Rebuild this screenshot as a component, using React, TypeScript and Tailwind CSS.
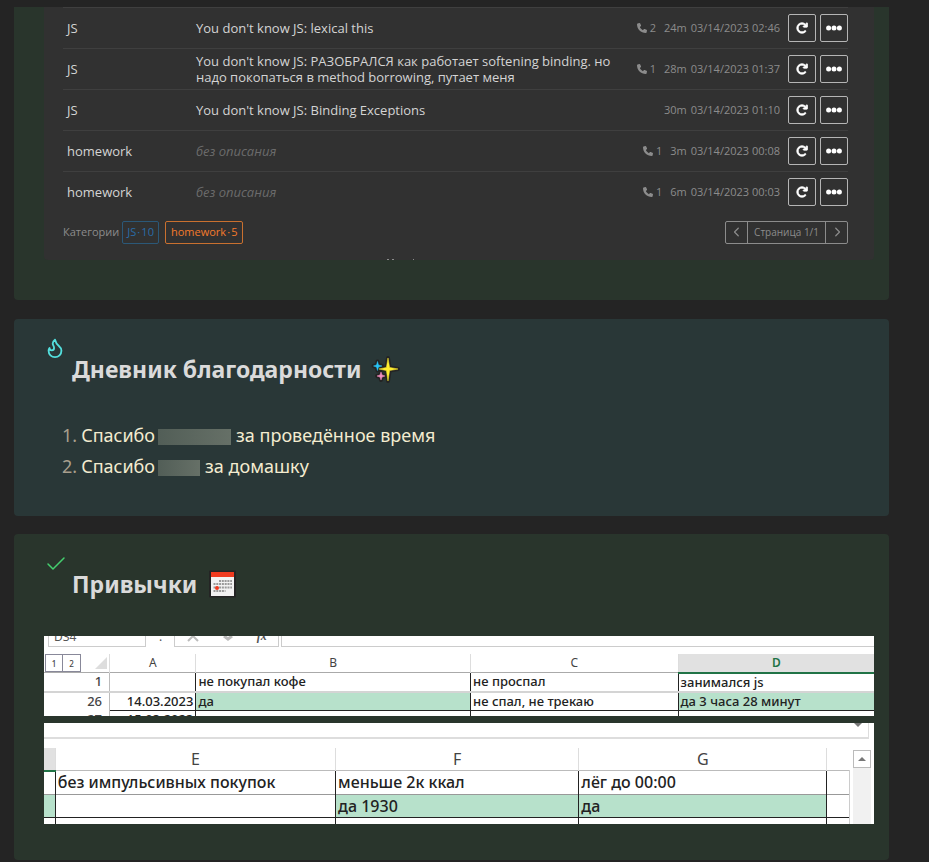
import { FaArrowRotateRight, FaPhone, FaChevronLeft, FaChevronRight } from "react-icons/fa6";
import { Check, Flame } from "lucide-react";

type Entry = { cat: string; text?: string; calls?: number; spent: string; date: string };

const entries: Entry[] = [
  { cat: "JS", text: "You don't know JS: lexical this", calls: 2, spent: "24m", date: "03/14/2023 02:46" },
  {
    cat: "JS",
    text: "You don't know JS: РАЗОБРАЛСЯ как работает softening binding. но надо покопаться в method borrowing, путает меня",
    calls: 1,
    spent: "28m",
    date: "03/14/2023 01:37",
  },
  { cat: "JS", text: "You don't know JS: Binding Exceptions", spent: "30m", date: "03/14/2023 01:10" },
  { cat: "homework", calls: 1, spent: "3m", date: "03/14/2023 00:08" },
  { cat: "homework", calls: 1, spent: "6m", date: "03/14/2023 00:03" },
];

function TimeLog() {
  return (
    <section className="mb-px rounded-b bg-[#29352c] pr-[15px] pb-10 pl-[30px]">
      <div className="overflow-hidden rounded-b bg-[#313131] pr-[26px] pl-[19px] font-['Open_Sans','Noto_Sans',sans-serif]">
        <table className="w-full table-fixed border-collapse text-[13px] leading-4 text-[#d4d4d4]">
          <colgroup>
            <col className="w-[129px]" />
            <col />
            <col className="w-[220px]" />
          </colgroup>
          <tbody>
            {entries.map((e) => (
              <tr key={e.date} className="h-[41px] border-t border-[#3f3f3f]">
                <td className="pl-1">{e.cat}</td>
                <td className="pl-1">{e.text || <i className="text-[#6b6b6b]">без описания</i>}</td>
                <td>
                  <div className="flex items-center justify-end text-[11px] whitespace-nowrap text-[#8c8c8c]">
                    {e.calls && (
                      <span className="mr-2 flex items-center gap-[3px]">
                        <FaPhone className="size-[10px]" />
                        {e.calls}
                      </span>
                    )}
                    <span className="mr-1">{e.spent}</span>
                    <span className="mr-2">{e.date}</span>
                    <button aria-label="Повторить" className="mr-1 flex size-7 items-center justify-center rounded-[2px] border border-[#b5b5b5] text-white">
                      <FaArrowRotateRight className="size-3" stroke="currentColor" strokeWidth="30" />
                    </button>
                    <button aria-label="Ещё" className="flex size-7 items-center justify-center rounded-[2px] border border-[#b5b5b5] text-white">
                      <svg viewBox="0 0 16 6" className="h-[6px] w-4" fill="currentColor">
                        <circle cx="2.600" cy="3" r="2.500" />
                        <circle cx="8" cy="3" r="2.500" />
                        <circle cx="13.400" cy="3" r="2.500" />
                      </svg>
                    </button>
                  </div>
                </td>
              </tr>
            ))}
          </tbody>
        </table>
        <div className="mt-2 flex items-center text-[11px] text-[#8c8c8c]">
          <span>Категории</span>
          <button className="ml-[3px] h-[23px] rounded-[2px] border border-[#2b5878] px-1 text-[#2a6ca8]">JS&#8202;·&#8202;10</button>
          <button className="ml-[6px] h-[23px] rounded-[2px] border border-[#c9702f] px-[5px] text-[#f47a2c]">homework&#8202;·&#8202;5</button>
          <div className="ml-auto flex h-[23px] items-stretch rounded-[2px] border border-[#8c8c8c] text-[10px]">
            <button aria-label="Назад" className="flex w-[21px] items-center justify-center">
              <FaChevronLeft />
            </button>
            <span className="flex items-center border-x border-[#8c8c8c] px-[6px]">Страница 1/1</span>
            <button aria-label="Вперёд" className="flex w-[21px] items-center justify-center">
              <FaChevronRight />
            </button>
          </div>
        </div>
        <div className="mt-[14px] flex h-[2px] justify-center gap-[3px] pr-[111px]">
          <i className="mt-px h-px w-[2px] bg-[#8c8c8c]" />
          <i className="mt-px h-px w-[2px] bg-[#8c8c8c]" />
          <i className="mt-px ml-4 h-px w-px bg-[#8c8c8c]" />
        </div>
      </div>
    </section>
  );
}

const stars = [
  { d: "M15 3l1.600 9.400L25 14l-8.400 1.600L15 26l-1.600-10.400L6 14l7.400-1.600z", fill: "#ffee2e" },
  { d: "M4.500 6.500l1 3.500 3.500 1-3.500 1-1 3.500-1-3.500L0.500 11l3-1z", fill: "#29c5f6" },
  { d: "M8 17l1 3 3 1-3 1-1 3-1-3-3-1 3-1z", fill: "#f48fc0" },
];

function Sparkles() {
  return (
    <svg viewBox="0 0 28 28" className="size-7 overflow-visible" strokeLinejoin="round">
      {stars.map((s) => (
        <path key={s.fill} d={s.d} fill="#242424" stroke="#242424" strokeWidth="4" />
      ))}
      {stars.map((s) => (
        <path key={s.fill} d={s.d} fill={s.fill} stroke={s.fill} strokeWidth="0.500" />
      ))}
    </svg>
  );
}

function Calendar() {
  return (
    <svg viewBox="0 0 28 28" className="size-7">
      <rect x="0" y="0.500" width="27" height="27" rx="1" fill="#242424" />
      <path d="M2 2h23v24H2z" fill="#f2f2f2" />
      <path d="M2 2h23v5H2z" fill="#f03a1f" />
      <path d="M10 11h13M4.500 14h18.500M4.500 17.500h18.500M4.500 21h12" stroke="#9a9a9a" strokeWidth="2" strokeDasharray="2 .8" />
      <circle cx="8" cy="18" r="2" fill="#f03a1f" />
    </svg>
  );
}

function Gratitude() {
  return (
    <section className="rounded bg-[#293737] px-[30px] pt-[18px] pb-[34px]">
      <Flame className="size-[22px] text-[#53dfdd]" />
      <h2 className="-mt-1 ml-7 flex items-center gap-3 text-[23px] leading-7 font-bold text-[#dadada]">
        Дневник благодарности <Sparkles />
      </h2>
      <ol className="mt-[37px] ml-[18px] text-lg leading-[31px] text-[#f3ecd0]">
        <li className="flex items-center">
          <span className="mr-1 text-[#a89f8d]">1.</span>Спасибо
          <span className="mt-1 mr-[5px] ml-[3px] h-4 w-[73px] bg-linear-to-r from-[#525e57] to-[#667067]" />
          за проведённое время
        </li>
        <li className="flex items-center">
          <span className="mr-1 text-[#a89f8d]">2.</span>Спасибо
          <span className="mt-1 mr-[5px] ml-[3px] h-4 w-[42px] bg-linear-to-r from-[#525e57] to-[#667067]" />
          за домашку
        </li>
      </ol>
    </section>
  );
}

function SheetTop() {
  return (
    <div className="h-20 overflow-hidden bg-white font-['Noto_Sans','Open_Sans',sans-serif] text-[#222]">
      <div className="flex h-[11px] text-xs leading-[1px] text-[#555]">
        <div className="ml-1 w-[98px] border-x border-b border-[#ccc] pl-[5px]">D34</div>
        <div className="ml-[13px]">:</div>
        <div className="ml-3 flex w-[105px] items-start justify-around border-x border-b border-[#ccc] text-[#bbb]">
          <svg viewBox="0 0 12 6" className="h-[6px] w-3" fill="none" stroke="currentColor" strokeWidth="2"><path d="M1 5l5-5 5 5" /></svg>
          <svg viewBox="0 0 12 6" className="h-[6px] w-3" fill="none" stroke="currentColor" strokeWidth="3"><path d="M2 0l4 3 4-3" /></svg>
          <i className="font-['Liberation_Serif',serif] font-bold text-[#555]">fx</i>
        </div>
        <div className="ml-[2px] flex-1 border-b border-l border-[#ccc]" />
      </div>
      <table className="mt-[7px] w-full table-fixed border-collapse text-[13px] font-medium whitespace-nowrap">
        <colgroup>
          <col className="w-[7.9%]" />
          <col className="w-[10.4%]" />
          <col className="w-[33.1%]" />
          <col className="w-[25%]" />
          <col className="w-[23.600%]" />
        </colgroup>
        <thead>
          <tr className="h-[19px] border-b border-[#aaa] text-xs leading-[18px] text-[#444]">
            <td className="border-r border-[#ddd]">
              <div className="flex h-[18px] items-center text-[8px]">
                <button className="ml-px size-[18px] border border-[#889]">1</button>
                <button className="size-[18px] border border-l-0 border-[#889]">2</button>
                <svg viewBox="0 0 12 12" className="mr-[2px] ml-auto size-3" fill="#ddd"><path d="M12 0v12H0z" /></svg>
              </div>
            </td>
            <th className="border-r border-[#ddd] font-normal">A</th>
            <th className="border-r border-[#ddd] font-normal">B</th>
            <th className="border-r border-[#ddd] font-normal">C</th>
            <th className="border-b-2 border-[#217346] bg-[#e1e1e1] font-semibold text-[#217346]">D</th>
          </tr>
        </thead>
        <tbody className="leading-[17px]">
          <tr className="h-[18px] border-b-2 border-[#d4d4d4]">
            <td className="border-r border-[#bbb] pr-[7px] text-right text-[#444]">1</td>
            <td className="border-r border-[#222]" />
            <td className="border-r border-[#222] pl-[2px]">не покупал кофе</td>
            <td className="border-r border-[#222] pl-[2px]">не проспал</td>
            <td className="pl-[2px]">занимался js</td>
          </tr>
          <tr className="h-[18px]">
            <td className="border-r border-[#bbb] pr-[7px] text-right text-[#444]">26</td>
            <td className="border-r border-b border-[#222] pr-[2px] text-right">14.03.2023</td>
            <td className="border-r border-b border-[#222] bg-[#b7e1cb] pl-[2px]">да</td>
            <td className="border-r border-b border-[#222] pl-[2px]">не спал, не трекаю</td>
            <td className="border-b border-[#222] bg-[#b7e1cb] pl-[2px]">да 3 часа 28 минут</td>
          </tr>
          <tr className="h-[18px] leading-[15px]">
            <td className="border-r border-[#bbb] pr-[7px] text-right text-[#444]">27</td>
            <td className="border-r border-[#222] pr-[2px] text-right">15.03.2023</td>
            <td className="border-r border-[#222]" />
            <td className="border-r border-[#222]" />
            <td />
          </tr>
        </tbody>
      </table>
    </div>
  );
}

function SheetBottom() {
  return (
    <div className="mt-[7px] h-[101px] overflow-hidden bg-white font-['Noto_Sans','Open_Sans',sans-serif] text-[#222]">
      <div className="mr-[5px] flex h-4 justify-end border-r border-b-2 border-[#ddd]">
        <svg viewBox="0 0 8 4" className="mr-[6px] h-1 w-2" fill="#777"><path d="M0 0h8L4 4z" /></svg>
      </div>
      <div className="mt-[9px] flex">
        <table className="flex-1 table-fixed border-collapse text-base font-medium whitespace-nowrap">
          <colgroup>
            <col className="w-[1.400%]" />
            <col className="w-[34.800%]" />
            <col className="w-[30.200%]" />
            <col className="w-[30.800%]" />
            <col className="w-[2.800%]" />
          </colgroup>
          <thead>
            <tr className="h-[23px] border-b border-[#bbb] leading-[22px] text-[#444]">
              <td className="border-r border-b-2 border-r-[#ddd] border-b-[#217346] bg-[#e1e1e1]" />
              <th className="border-r border-[#ddd] font-normal">E</th>
              <th className="border-r border-[#ddd] font-normal">F</th>
              <th className="border-r border-[#ddd] font-normal">G</th>
              <td />
            </tr>
          </thead>
          <tbody className="leading-[23px]">
            <tr className="h-6 border-b border-[#999]">
              <td className="border-r border-[#222]" />
              <td className="border-r border-[#222] pl-[2px]">без импульсивных покупок</td>
              <td className="border-r border-[#222] pl-[2px]">меньше 2к ккал</td>
              <td className="border-r border-[#222] pl-[2px]">лёг до 00:00</td>
              <td className="border-r border-[#ccc]" />
            </tr>
            <tr className="h-[23px] border-b border-[#222] leading-[22px]">
              <td className="border-r border-[#222] bg-[#b7e1cb]" />
              <td className="border-r border-[#222]" />
              <td className="border-r border-[#222] bg-[#b7e1cb] pl-[2px]">да 1930</td>
              <td className="border-r border-[#222] bg-[#b7e1cb] pl-[2px]">да</td>
              <td className="border-r border-[#ccc]" />
            </tr>
            <tr className="h-[23px]">
              <td className="border-r border-[#222]" />
              <td className="border-r border-[#222]" />
              <td className="border-r border-[#222]" />
              <td className="border-r border-[#222]" />
              <td className="border-r border-[#ccc]" />
            </tr>
          </tbody>
        </table>
        <div className="mt-[2px] mr-[3px] ml-[3px] w-[18px] bg-[#f1f1f1]">
          <button aria-label="Вверх" className="flex size-[18px] items-center justify-center border border-[#bbb] bg-white">
            <svg viewBox="0 0 8 4" className="h-1 w-2" fill="#777"><path d="M0 4h8L4 0z" /></svg>
          </button>
        </div>
      </div>
    </div>
  );
}

function Habits() {
  return (
    <section className="rounded bg-[#29352c] pt-[18px] pr-[15px] pb-[36px] pl-[30px]">
      <Check className="size-6 text-[#44cf6e]" strokeWidth={1.5} />
      <h2 className="-mt-[6px] mb-[38px] ml-7 flex items-center gap-3 text-[23px] leading-7 font-bold text-[#dadada]">
        Привычки <Calendar />
      </h2>
      <SheetTop />
      <SheetBottom />
    </section>
  );
}

export default function App() {
  return (
    <main className="flex min-h-screen flex-col gap-[18px] bg-[#242424] pt-[7px] pr-10 pl-[14px] font-['Noto_Sans','Open_Sans',sans-serif]">
      <TimeLog />
      <Gratitude />
      <Habits />
    </main>
  );
}
